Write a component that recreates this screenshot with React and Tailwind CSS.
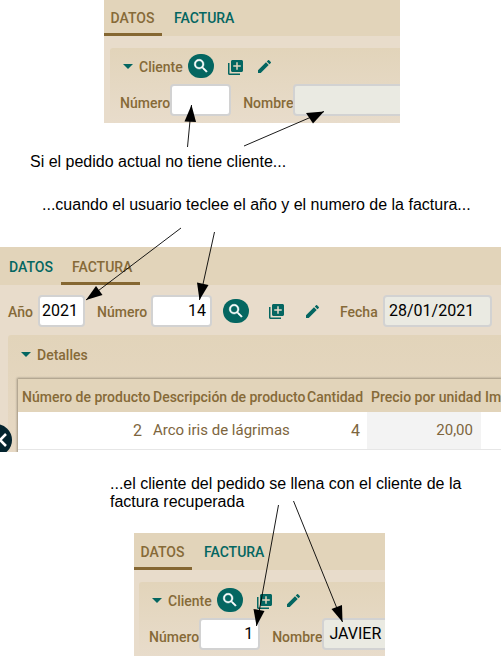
import React from 'react';

const label = 'whitespace-nowrap text-[14px] font-medium leading-[16px] text-[#866a38]';

function SearchButton({ className = '' }) {
  return (
    <span className={`flex h-[24px] w-[26px] shrink-0 items-center justify-center rounded-full bg-[#046661] ${className}`}>
      <svg viewBox="0 0 24 24" className="h-[18px] w-[18px]" fill="#fff">
        <path stroke="#fff" strokeWidth=".6" d="M15.5 14h-.79l-.28-.27A6.471 6.471 0 0 0 16 9.5 6.5 6.5 0 1 0 9.5 16c1.61 0 3.09-.59 4.23-1.57l.27.28v.79l5 4.99L20.49 19l-4.99-5zm-6 0C7.01 14 5 11.99 5 9.5S7.01 5 9.5 5 14 7.01 14 9.5 11.99 14 9.5 14z" />
      </svg>
    </span>
  );
}

function AddIcon({ className = '' }) {
  return (
    <svg viewBox="2 2 20 20" className={`h-[15px] w-[15px] shrink-0 ${className}`} fill="#046661">
      <path d="M4 6H2v14c0 1.1.9 2 2 2h14v-2H4V6zm16-4H8c-1.100 0-2 .9-2 2v12c0 1.100.9 2 2 2h12c1.100 0 2-.9 2-2V4c0-1.100-.9-2-2-2zm-1 9h-4v4h-2v-4H9V9h4V5h2v4h4v2z" />
    </svg>
  );
}

function PencilIcon({ className = '' }) {
  return (
    <svg viewBox="3 3 18 18" className={`h-[13px] w-[13px] shrink-0 ${className}`} fill="#046661">
      <path d="M3 17.25V21h3.750L17.810 9.940l-3.750-3.750L3 17.250zM20.710 7.040a1 1 0 0 0 0-1.410l-2.340-2.340a1 1 0 0 0-1.410 0l-1.830 1.830 3.750 3.750 1.830-1.830z" />
    </svg>
  );
}

function Caret() {
  return (
    <svg viewBox="0 0 10 5" className="h-[5px] w-[10px] shrink-0" fill="#046661">
      <path d="M0 0h10L5 5z" />
    </svg>
  );
}

function Tab({ active, className = '', children }) {
  return (
    <div className={`relative h-full whitespace-nowrap text-[14px] font-medium leading-[16px] ${active ? 'border-b-[3px] border-[#856732] text-[#866a38]' : 'text-[#046661]'} ${className}`}>
      {children}
    </div>
  );
}

const field = 'flex h-[32px] shrink-0 items-center rounded-[4px] border-2 border-[#d2d2d2] text-[16px] text-black';

function CustomerPanel({ className, tabsClass, groupClass, number, name }) {
  return (
    <section className={`flex flex-col overflow-hidden bg-[#e8dccb] ${className}`}>
      <div className={`flex shrink-0 bg-[#e2d4ba] ${tabsClass}`}>
        <Tab active className="w-[58px] pl-[6.500px]">DATOS</Tab>
        <Tab className="pl-[12px]">FACTURA</Tab>
      </div>
      <div className={`mt-[12px] flex-1 rounded-tl-[3px] bg-linear-to-b from-[#e2d4ba] to-[#e8dccb] ${groupClass}`}>
        <div className="flex h-[36px] items-center">
          <Caret />
          <span className={`ml-[6px] mt-[2px] w-[41px] ${label}`}>Cliente</span>
          <SearchButton className="ml-[8px]" />
          <AddIcon className="ml-[14px] mt-[2px]" />
          <PencilIcon className="ml-[15px] mt-[1px]" />
        </div>
        <div className="-ml-[3px] flex items-center">
          <span className={`mt-[5px] w-[54px] ${label}`}>Número</span>
          <div className={`${field} w-[61px] justify-end bg-white pr-[5px]`}>{number}</div>
          <span className={`ml-[12px] mt-[5px] w-[53px] ${label}`}>Nombre</span>
          <div className={`${field} w-[200px] bg-[#eaeae2] pl-[5px] text-[15px]`}>{name}</div>
        </div>
      </div>
    </section>
  );
}

function Arrow({ from, to, head }) {
  return (
    <g>
      <path d={`M${from}L${to}`} stroke="#000" strokeWidth=".9" />
      <path d={`M${to}L${head}Z`} fill="#000" />
    </g>
  );
}

const note = "whitespace-nowrap font-['Liberation_Sans',sans-serif] text-[16px] leading-[18px] text-black";
const th = 'pt-[10px]';
const td = 'flex items-center border-b border-[#e6e6e6]';

export default function App() {
  return (
    <main className="relative flex h-[656px] w-[501px] flex-col overflow-hidden bg-white font-[Roboto,sans-serif]">
      <CustomerPanel className="ml-[104px] h-[123px] w-[296px]" tabsClass="h-[36px] pt-0 [&>div]:pt-[10px]" groupClass="ml-[6px] pl-[13px]" />

      <p className={`ml-[30px] mt-[30px] ${note}`}>Si el pedido actual no tiene cliente...</p>
      <p className={`ml-[42px] mt-[25px] ${note}`}>...cuando el usuario teclee el año y el numero de la factura...</p>

      <section className="relative mt-[33px] flex h-[205px] w-full shrink-0 flex-col overflow-hidden bg-[#e8dccb]">
        <div className="flex h-[38px] shrink-0 bg-[#e2d4ba] [&>div]:pt-[12px]">
          <Tab className="w-[61px] pl-[9px]">DATOS</Tab>
          <Tab active className="w-[79px] pl-[11px]">FACTURA</Tab>
        </div>
        <div className="flex h-[50px] shrink-0 items-center pb-[0px] pl-[8px] pt-[4px]">
          <span className={`w-[30px] ${label}`}>Año</span>
          <div className={`${field} -mt-[3px] w-[47px] justify-end bg-white pr-[5px]`}>2021</div>
          <span className={`ml-[12px] w-[54px] ${label}`}>Número</span>
          <div className={`${field} -mt-[3px] w-[61px] justify-end bg-white pr-[4px]`}>14</div>
          <SearchButton className="-mt-[3px] ml-[11px]" />
          <AddIcon className="ml-[20px] -mt-[1px]" />
          <PencilIcon className="ml-[22px] -mt-[1px]" />
          <span className={`ml-[21px] w-[43px] ${label}`}>Fecha</span>
          <div className={`${field} -mt-[3px] w-[109px] bg-[#eaeae2] pl-[4px] text-[15px]`}>28/01/2021</div>
        </div>
        <div className="ml-[8px] flex flex-1 flex-col rounded-tl-[3px] bg-linear-to-b from-[#e2d4ba] to-[#e6d8c4]">
          <div className="flex h-[44px] items-center pb-[5px] pl-[13px]">
            <Caret />
            <span className={`ml-[6px] mt-[1px] ${label}`}>Detalles</span>
          </div>
          <div className="ml-[10px] flex flex-1 flex-col bg-white shadow-[0_0_2px_1px_#9d927f]">
            <div className={`grid h-[33px] grid-cols-[135px_154px_64px_114px_116px] bg-[#e2d4ba] ${label}`}>
              <span className={`${th} pl-[4px]`}>Número de producto</span>
              <span className={th}>Descripción de producto</span>
              <span className={th}>Cantidad</span>
              <span className={`${th} pl-0`}>Precio por unidad</span>
              <span className={th}>Importe</span>
            </div>
            <div className="grid h-[38px] grid-cols-[124px_197px_28px_114px_120px] text-[16px] text-[#7d653d]">
              <span className={`${td} justify-end`}>2</span>
              <span className={`${td} pl-[11px] text-[15px]`}>Arco iris de lágrimas</span>
              <span className={`${td} pl-[12px]`}>4</span>
              <span className={`${td} justify-end bg-[#f3f3f3] pr-[8px] text-[15px]`}>20,00</span>
              <span className={td} />
            </div>
          </div>
        </div>
        <span className="absolute -left-[20px] top-[177px] flex h-[32px] w-[32px] items-center justify-end rounded-full bg-[#04242f]">
          <svg viewBox="0 0 9 14" className="mr-[5px] h-[14px] w-[9px]" fill="none" stroke="#fff" strokeWidth="2.600">
            <path d="M8 1L2 7l6 6" />
          </svg>
        </span>
      </section>

      <p className={`ml-[110px] mt-[23px] ${note}`}>...el cliente del pedido se llena con el cliente de la<br />factura recuperada</p>

      <CustomerPanel className="ml-[134px] mt-[22px] h-[123px] w-[251px] shrink-0" tabsClass="h-[37px] [&>div]:pt-[11px]" groupClass="ml-[5px] pl-[13px]" number="1" name="JAVIER" />

      <svg className="pointer-events-none absolute inset-0" width="501" height="656" viewBox="0 0 501 656">
        <Arrow from="187.5 147" to="191.500 105" head="184.500 121.500L196 122" />
        <Arrow from="244 146" to="324 111.500" head="306 113L313 123.500" />
        <Arrow from="181 228" to="86 300" head="96 286L102.500 295" />
        <Arrow from="214.500 232" to="199.500 300" head="197 282.500L208.500 285" />
        <Arrow from="278.500 505" to="256.500 626" head="253.500 609L264.500 611" />
        <Arrow from="293.500 501" to="342.500 622" head="331.500 609L342 605" />
      </svg>
    </main>
  );
}
